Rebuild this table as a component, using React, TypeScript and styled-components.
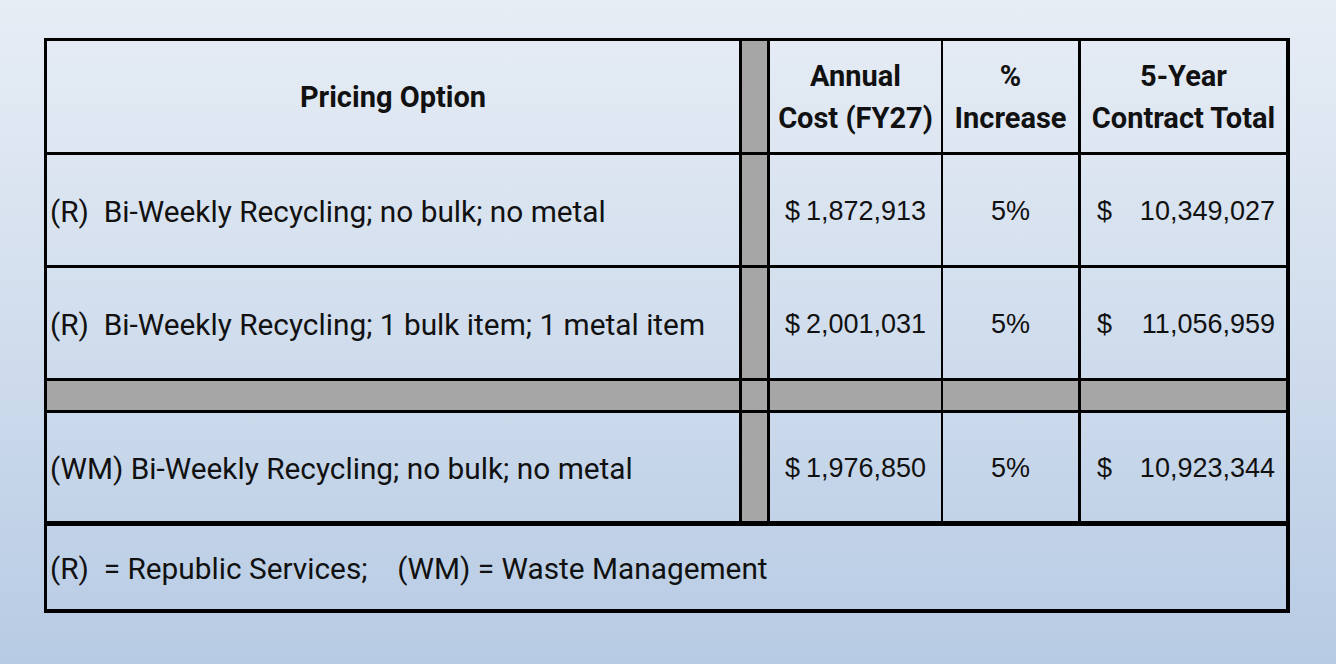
import styled, { createGlobalStyle } from "styled-components";

const GlobalStyle = createGlobalStyle`
  html, body {
    margin: 0;
    padding: 0;
  }
  body {
    width: 1336px;
    height: 664px;
    overflow: hidden;
    background: linear-gradient(180deg, #e7edf5 0%, #d3dfee 45%, #b7cbe4 100%);
    font-family: Roboto, "Liberation Sans", sans-serif;
    color: #111;
  }
`;

const Page = styled.div`
  padding: 38px 0 0 44px;
`;

const Table = styled.div`
  width: 1246px;
  box-sizing: border-box;
  border: 3px solid #000;
  border-right-width: 4px;
  border-bottom-width: 4px;
  display: grid;
  grid-template-columns: 695px 28px 173px 138px 205px;
  grid-template-rows: 114px 113px 113px 32px 113px 83px;
`;

const Cell = styled.div<{ $right?: number; $bottom?: number; $grey?: boolean; $align?: string }>`
  box-sizing: border-box;
  border-right: ${({ $right = 0 }) => $right}px solid #000;
  border-bottom: ${({ $bottom = 0 }) => $bottom}px solid #000;
  background: ${({ $grey }) => ($grey ? "#a6a6a6" : "transparent")};
  display: flex;
  align-items: center;
  justify-content: ${({ $align }) => $align ?? "center"};
  min-width: 0;
`;

const HeadText = styled.div`
  font-weight: 700;
  font-size: 29px;
  line-height: 42px;
  text-align: center;
  white-space: nowrap;
`;

const Label = styled.div`
  font-size: 29.8px;
  padding-left: 3px;
  white-space: pre;
  padding-top: 2px;
`;

const Num = styled.div`
  font-family: "Liberation Sans", Arial, sans-serif;
  font-size: 27px;
  white-space: nowrap;
  padding-top: 2px;
`;

const Dollar = styled.span`
  margin-right: 6px;
`;

const Money = styled(Num)`
  width: 100%;
  display: flex;
  justify-content: space-between;
  padding: 2px 11px 0 16px;
  box-sizing: border-box;
`;

const Footer = styled(Cell)`
  grid-column: 1 / -1;
  justify-content: flex-start;
`;

const rows = [
  { label: "(R)  Bi-Weekly Recycling; no bulk; no metal", annual: "1,872,913", total: "10,349,027" },
  { label: "(R)  Bi-Weekly Recycling; 1 bulk item; 1 metal item", annual: "2,001,031", total: "11,056,959" },
];

const wm = { label: "(WM) Bi-Weekly Recycling; no bulk; no metal", annual: "1,976,850", total: "10,923,344" };

function DataRow({ label, annual, total, bottom }: { label: string; annual: string; total: string; bottom: number }) {
  return (
    <>
      <Cell $right={3} $bottom={bottom} $align="flex-start">
        <Label>{label}</Label>
      </Cell>
      <Cell $right={3} $bottom={bottom} $grey />
      <Cell $right={2} $bottom={bottom}>
        <Num>
          <Dollar>$</Dollar>
          {annual}
        </Num>
      </Cell>
      <Cell $right={3} $bottom={bottom}>
        <Num>5%</Num>
      </Cell>
      <Cell $bottom={bottom}>
        <Money>
          <span>$</span>
          <span>{total}</span>
        </Money>
      </Cell>
    </>
  );
}

export default function App() {
  return (
    <>
      <GlobalStyle />
      <Page>
        <Table>
          <Cell $right={3} $bottom={3}>
            <HeadText>Pricing Option</HeadText>
          </Cell>
          <Cell $right={3} $bottom={3} $grey />
          <Cell $right={2} $bottom={3}>
            <HeadText>
              Annual
              <br />
              Cost (FY27)
            </HeadText>
          </Cell>
          <Cell $right={3} $bottom={3}>
            <HeadText>
              %
              <br />
              Increase
            </HeadText>
          </Cell>
          <Cell $bottom={3}>
            <HeadText>
              5-Year
              <br />
              Contract Total
            </HeadText>
          </Cell>

          {rows.map((r) => (
            <DataRow key={r.annual} {...r} bottom={3} />
          ))}

          <Cell $right={3} $bottom={3} $grey />
          <Cell $right={3} $bottom={3} $grey />
          <Cell $right={2} $bottom={3} $grey />
          <Cell $right={3} $bottom={3} $grey />
          <Cell $bottom={3} $grey />

          <DataRow {...wm} bottom={5} />

          <Footer>
            <Label>(R)  = Republic Services;    (WM) = Waste Management</Label>
          </Footer>
        </Table>
      </Page>
    </>
  );
}
